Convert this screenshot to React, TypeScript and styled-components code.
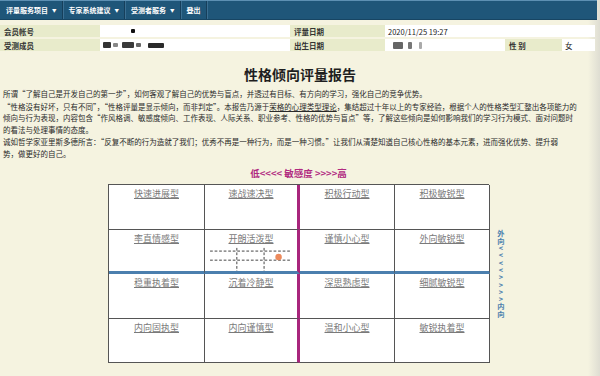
import React from "react";
import styled, { createGlobalStyle } from "styled-components";

const Global = createGlobalStyle`
  html, body { margin: 0; padding: 0; }
  body {
    width: 600px;
    height: 376px;
    overflow: hidden;
    background: linear-gradient(to right, #f5f3e0 0, #f5f3e0 588px, #deddd2 600px);
    font-family: "Noto Sans CJK SC", "Noto Sans", sans-serif;
    color: #2a2a2a;
  }
`;

const Page = styled.div`
  display: flex;
  flex-direction: column;
  width: 600px;
`;

const NavBar = styled.nav`
  display: flex;
  height: 20px;
  width: 597px;
  box-sizing: border-box;
  background: #1f5679;
  border-top: 1px solid #5d90b3;
  border-bottom: 1px solid #174563;
`;

const NavItem = styled.div`
  display: flex;
  align-items: center;
  padding: 0 5px 0 6px;
  color: #ffffff;
  font-size: 7px;
  font-weight: 700;
  border-right: 1px solid #163f5b;
  box-shadow: 1px 0 0 #3b6f92;
`;

const Caret = styled.span`
  font-size: 4.5px;
  margin-left: 4px;
`;

const InfoGrid = styled.div`
  display: grid;
  grid-template-columns: 100px 190px 95px 120px 57px 33px;
  grid-auto-rows: 12px;
  row-gap: 2px;
  margin-top: 5px;
  width: 595px;
`;

const Label = styled.div`
  display: flex;
  align-items: center;
  padding-left: 4px;
  background: #e8ebcb;
  font-size: 7.5px;
  font-weight: 700;
  color: #333;
`;

const Value = styled.div<{ $span?: number }>`
  grid-column: span ${(p) => p.$span ?? 1};
  display: flex;
  align-items: center;
  gap: 2px;
  padding-left: 3px;
  background: #ffffff;
  font-size: 7.5px;
  color: #222;
`;

const Blot = styled.span<{ $w: number; $h: number; $c: string; $ml?: number }>`
  display: inline-block;
  width: ${(p) => p.$w}px;
  height: ${(p) => p.$h}px;
  margin-left: ${(p) => p.$ml ?? 0}px;
  background: ${(p) => p.$c};
  border-radius: 1px;
  filter: blur(0.4px);
`;

const Title = styled.h1`
  margin: 15px 0 6px;
  text-align: center;
  font-size: 14px;
  line-height: 16px;
  font-weight: 700;
  color: #1e1e1e;
`;

const Body = styled.div`
  display: flex;
  flex-direction: column;
  gap: 1px;
  padding: 0 3px;
`;

const Para = styled.p`
  margin: 0;
  font-size: 7.5px;
  line-height: 11.5px;
  color: #2a2a2a;
`;

const Line = styled.span`
  display: block;
  white-space: nowrap;
`;

const TextLink = styled.a`
  color: inherit;
  text-decoration: underline;
`;

const AxisTitle = styled.div`
  margin: 8px 0 5px;
  text-align: center;
  width: 597px;
  font-size: 9.5px;
  line-height: 12px;
  font-weight: 700;
  color: #b12a80;
`;

const ChartRow = styled.div`
  display: grid;
  grid-template-columns: 1fr 381px 1fr;
  width: 597px;
`;

const TypeGrid = styled.div`
  grid-column: 2;
  display: grid;
  grid-template-columns: 96px 95px 95px 95px;
  grid-template-rows: repeat(4, 44.5px);
  box-sizing: border-box;
  border-left: 1px solid #555;
  border-top: 1px solid #555;
  background: #ffffff;
`;

const Cell = styled.div<{ $magenta?: boolean; $blue?: boolean }>`
  display: flex;
  flex-direction: column;
  align-items: center;
  box-sizing: border-box;
  padding-top: 3px;
  border-right: ${(p) => (p.$magenta ? "3px solid #a8267c" : "1px solid #555")};
  border-bottom: ${(p) => (p.$blue ? "3px solid #4b7fae" : "1px solid #555")};
`;

const TypeLink = styled.a`
  font-size: 9px;
  line-height: 11px;
  color: #7a7a7a;
  text-decoration: underline;
`;

const Diagram = styled.svg`
  display: block;
  margin-top: 3px;
  margin-right: 2px;
`;

const SideLabel = styled.div`
  grid-column: 3;
  align-self: center;
  justify-self: start;
  margin-left: 7px;
  writing-mode: vertical-rl;
  text-orientation: upright;
  font-size: 7.3px;
  font-weight: 700;
  color: #4b7fae;
  letter-spacing: 0;
`;

const types = [
  "快速进展型", "速战速决型", "积极行动型", "积极敏锐型",
  "率直情感型", "开朗活泼型", "谨慎小心型", "外向敏锐型",
  "稳重执着型", "沉着冷静型", "深思熟虑型", "细腻敏锐型",
  "内向固执型", "内向谨慎型", "温和小心型", "敏锐执着型",
];

const Dashes = () => (
  <Diagram width="88" height="27" viewBox="0 0 88 27">
    <g stroke="#333" strokeWidth="1" strokeDasharray="3 2" fill="none">
      <line x1="0" y1="4.5" x2="88" y2="4.5" />
      <line x1="0" y1="14.5" x2="88" y2="14.5" />
      <line x1="29.5" y1="1" x2="29.5" y2="27" />
      <line x1="59.5" y1="1" x2="59.5" y2="27" />
    </g>
    <circle cx="75.5" cy="11" r="3.6" fill="#ec8a5c" />
  </Diagram>
);

export default function App() {
  return (
    <Page>
      <Global />
      <NavBar>
        <NavItem>评量服务项目<Caret>▼</Caret></NavItem>
        <NavItem>专家系统建议<Caret>▼</Caret></NavItem>
        <NavItem>受测者服务<Caret>▼</Caret></NavItem>
        <NavItem>登出</NavItem>
      </NavBar>

      <InfoGrid>
        <Label>会员帐号</Label>
        <Value>
          <Blot $w={4} $h={4} $c="#111" $ml={28} />
        </Value>
        <Label>评量日期</Label>
        <Value $span={3}>2020/11/25 19:27</Value>

        <Label>受测成员</Label>
        <Value>
          <Blot $w={8} $h={6} $c="#333" />
          <Blot $w={5} $h={4} $c="#888" />
          <Blot $w={12} $h={6} $c="#3a3a3a" $ml={2} />
          <Blot $w={5} $h={4} $c="#666" />
          <Blot $w={16} $h={5} $c="#2a2a2a" $ml={5} />
        </Value>
        <Label>出生日期</Label>
        <Value>
          <Blot $w={10} $h={7} $c="#666" $ml={5} />
          <Blot $w={4} $h={7} $c="#777" $ml={3} />
          <Blot $w={3} $h={7} $c="#aaa" $ml={5} />
        </Value>
        <Label>性 别</Label>
        <Value>女</Value>
      </InfoGrid>

      <Title>性格倾向评量报告</Title>

      <Body>
        <Para>
          <Line>所谓“了解自己是开发自己的第一步”，如何客观了解自己的优势与盲点，并透过有目标、有方向的学习，强化自己的竞争优势。</Line>
        </Para>
        <Para>
          <Line>
            “性格没有好坏，只有不同”，“性格评量是显示倾向，而非判定”。本报告乃源于
            <TextLink>荣格的心理类型理论</TextLink>
            ，集结超过十年以上的专家经验，根据个人的性格类型汇整出各项能力的
          </Line>
          <Line>倾向与行为表现，内容包含“作风格调、敏感度倾向、工作表现、人际关系、职业参考、性格的优势与盲点”等，了解这些倾向是如何影响我们的学习行为模式、面对问题时</Line>
          <Line>的看法与处理事情的态度。</Line>
        </Para>
        <Para>
          <Line>诚如哲学家亚里斯多德所言：“反复不断的行为造就了我们；优秀不再是一种行为，而是一种习惯。”让我们从清楚知道自己核心性格的基本元素，进而强化优势、提升弱</Line>
          <Line>势，做更好的自己。</Line>
        </Para>
      </Body>

      <AxisTitle>低&lt;&lt;&lt;&lt; 敏感度 &gt;&gt;&gt;&gt;高</AxisTitle>

      <ChartRow>
        <TypeGrid>
          {types.map((t, i) => {
            const col = i % 4;
            const row = Math.floor(i / 4);
            return (
              <Cell key={t} $magenta={col === 1} $blue={row === 1}>
                <TypeLink>{t}</TypeLink>
                {t === "开朗活泼型" && <Dashes />}
              </Cell>
            );
          })}
        </TypeGrid>
        <SideLabel>外向&lt;&lt;&lt;&lt;&gt;&gt;&gt;&gt;内向</SideLabel>
      </ChartRow>
    </Page>
  );
}
